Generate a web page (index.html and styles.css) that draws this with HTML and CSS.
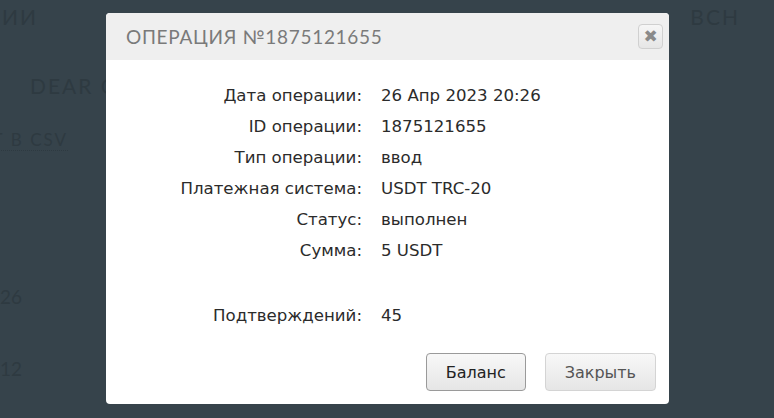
FILE: index.html
```html
<!DOCTYPE html>
<html lang="ru">
<head>
  <meta charset="UTF-8">
  <meta name="viewport" content="width=device-width, initial-scale=1.0">
  <title>Операция №1875121655</title>
  <link rel="stylesheet" href="styles.css">
</head>
<body>
  <div class="page">
    <nav class="tabs">
      <span class="tab">ИИ</span>
      <span class="tab">ВСН</span>
    </nav>
    <h2 class="page-title">DEAR CLIENT</h2>
    <div class="edge export-wrap">
      <a class="export">ЭКСПОРТ В CSV</a>
    </div>
    <div class="history">
      <div class="edge history-row">20:26</div>
      <div class="edge history-row">11:12</div>
    </div>
  </div>

  <div class="modal">
    <div class="modal-header">
      <h3 class="modal-title">Операция №1875121655</h3>
      <button class="modal-close" type="button">&#10006;</button>
    </div>
    <div class="modal-body">
      <div class="info-row"><span class="info-label">Дата операции:</span><span class="info-value">26 Апр 2023 20:26</span></div>
      <div class="info-row"><span class="info-label">ID операции:</span><span class="info-value">1875121655</span></div>
      <div class="info-row"><span class="info-label">Тип операции:</span><span class="info-value">ввод</span></div>
      <div class="info-row"><span class="info-label">Платежная система:</span><span class="info-value">USDT TRC-20</span></div>
      <div class="info-row"><span class="info-label">Статус:</span><span class="info-value">выполнен</span></div>
      <div class="info-row"><span class="info-label">Сумма:</span><span class="info-value">5 USDT</span></div>
      <div class="info-row info-gap"><span class="info-label">Подтверждений:</span><span class="info-value">45</span></div>
    </div>
    <div class="modal-footer">
      <button class="btn btn-primary" type="button">Баланс</button>
      <button class="btn" type="button">Закрыть</button>
    </div>
  </div>
</body>
</html>
```

FILE: styles.css
```css
html, body {
  margin: 0;
  padding: 0;
  height: 100%;
}

body {
  background-color: #36434b;
  font-family: "DejaVu Sans", sans-serif;
  overflow: hidden;
}

/* page behind the overlay */
.page {
  height: 100%;
  overflow: hidden;
  color: #2e3a41;
  font-family: "Lato", sans-serif;
  letter-spacing: 2px;
}

.tabs {
  display: flex;
  justify-content: space-between;
  padding: 4px 34px 0 2px;
  font-size: 21px;
}

.page-title {
  margin: 44px 0 0 30px;
  font-size: 21px;
  font-weight: 400;
}

.edge {
  display: flex;
  justify-content: flex-end;
  white-space: nowrap;
}

.export-wrap {
  width: 68px;
  margin-top: 32px;
}

.export {
  font-size: 17px;
  line-height: 20px;
  border-bottom: 1px dotted #2e3a41;
}

.history {
  padding-top: 134px;
  font-size: 19px;
  letter-spacing: 0;
}

.history-row {
  width: 22px;
  height: 72px;
}

/* modal */
.modal {
  position: absolute;
  left: 106px;
  top: 13px;
  width: 563px;
  height: 391px;
  background-color: #ffffff;
  border-radius: 4px;
  overflow: hidden;
  display: flex;
  flex-direction: column;
}

.modal-header {
  display: flex;
  align-items: center;
  justify-content: space-between;
  height: 47px;
  padding: 0 6px 0 20px;
  background-color: #efefef;
}

.modal-title {
  margin: 0;
  font-family: "Lato", sans-serif;
  font-weight: 400;
  font-size: 19px;
  letter-spacing: 0.7px;
  text-transform: uppercase;
  color: #7a7a7a;
}

.modal-close {
  width: 25px;
  height: 25px;
  padding: 0;
  border: 1px solid #d0d0d0;
  border-radius: 4px;
  background: linear-gradient(#f6f6f6, #e6e6e6);
  color: #8a8a8a;
  font-family: "DejaVu Sans", sans-serif;
  font-size: 17px;
  font-weight: 700;
  line-height: 23px;
  cursor: pointer;
}

.modal-body {
  flex: 1;
  padding-top: 20px;
}

.info-row {
  display: grid;
  grid-template-columns: 256px 1fr;
  column-gap: 19px;
  height: 31px;
  font-size: 16.6px;
  line-height: 31px;
  color: #2b2b2b;
}

.info-gap {
  margin-top: 34px;
}

.info-label {
  text-align: right;
}

.modal-footer {
  display: flex;
  justify-content: flex-end;
  gap: 19px;
  padding: 0 13px 13px 0;
}

.btn {
  height: 38px;
  padding: 0 19px;
  border: 1px solid #d4d4d4;
  border-radius: 4px;
  background: linear-gradient(#f8f8f8, #e6e6e6);
  color: #555555;
  font-family: "DejaVu Sans", sans-serif;
  font-size: 16px;
  cursor: pointer;
}

.btn-primary {
  min-width: 99px;
  border-color: #9a9a9a;
  color: #222222;
}
```
